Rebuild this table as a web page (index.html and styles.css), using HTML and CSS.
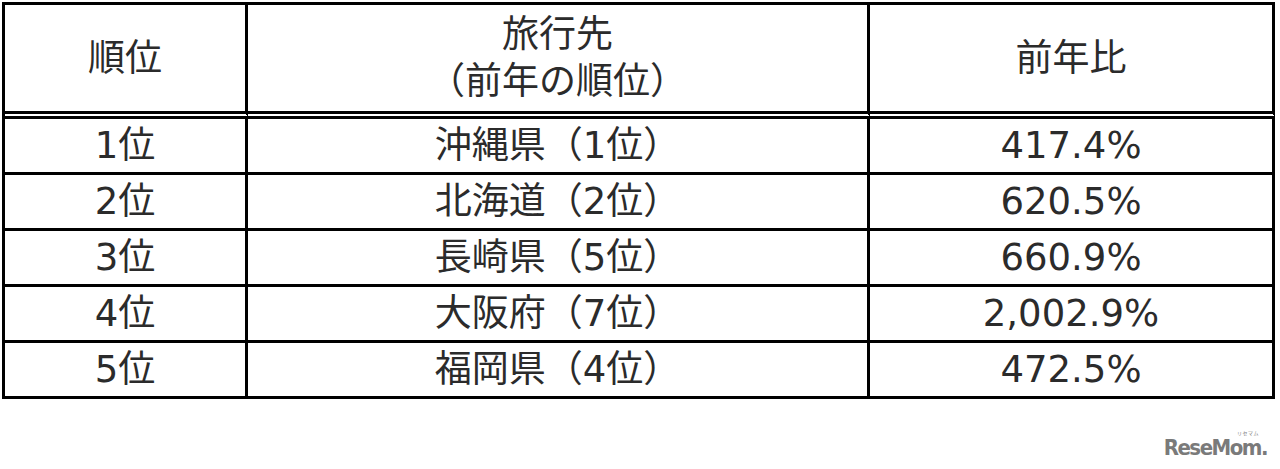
FILE: index.html
```html
<!DOCTYPE html>
<html lang="ja">
<head>
<meta charset="utf-8">
<title>旅行先ランキング</title>
<link rel="stylesheet" href="styles.css">
</head>
<body>
<div class="page">
  <table class="rank">
    <thead>
      <tr>
        <th class="c1">順位</th>
        <th class="c2">旅行先<br>（前年の順位）</th>
        <th class="c3">前年比</th>
      </tr>
    </thead>
    <tbody>
      <tr><td>1位</td><td>沖縄県（1位）</td><td>417.4%</td></tr>
      <tr><td>2位</td><td>北海道（2位）</td><td>620.5%</td></tr>
      <tr><td>3位</td><td>長崎県（5位）</td><td>660.9%</td></tr>
      <tr><td>4位</td><td>大阪府（7位）</td><td>2,002.9%</td></tr>
      <tr><td>5位</td><td>福岡県（4位）</td><td>472.5%</td></tr>
    </tbody>
  </table>
  <div class="footer">
    <div class="logo">ReseMom.<span class="ruby">リセマム</span></div>
  </div>
</div>
</body>
</html>
```
FILE: styles.css
```css
html, body {
  margin: 0;
  padding: 0;
  background: #ffffff;
}

.page {
  padding: 2px 0 0 2px;
  width: 1280px;
  box-sizing: border-box;
}

.rank {
  border-collapse: separate;
  border-spacing: 0;
  border-top: 3px solid #000;
  border-left: 3px solid #000;
  font-family: "DejaVu Sans", "Noto Sans CJK JP", sans-serif;
  font-size: 37px;
  color: #2b2b2b;
  table-layout: fixed;
}

.rank th,
.rank td {
  border-right: 3px solid #000;
  border-bottom: 3px solid #000;
  text-align: center;
  vertical-align: middle;
  padding: 0;
  font-weight: normal;
}

.rank th {
  height: 106px;
  line-height: 47px;
  border-bottom: 8px double #000;
}

.rank td {
  height: 53px;
  line-height: 53px;
}

.rank .c1 { width: 240px; }
.rank .c2 { width: 619px; }
.rank .c3 { width: 402px; }

.footer {
  display: flex;
  justify-content: flex-end;
  padding-right: 13px;
  margin-top: 37px;
}

.logo {
  position: relative;
  font-family: "DejaVu Sans Condensed", "DejaVu Sans", sans-serif;
  font-weight: bold;
  font-size: 22px;
  letter-spacing: -1.5px;
  color: #7a7a7a;
  line-height: 24px;
}

.ruby {
  position: absolute;
  right: 8px;
  top: -6px;
  font-family: "Noto Sans CJK JP", sans-serif;
  font-size: 5px;
  font-weight: normal;
  letter-spacing: 0.5px;
  line-height: 6px;
  color: #7a7a7a;
}
```
